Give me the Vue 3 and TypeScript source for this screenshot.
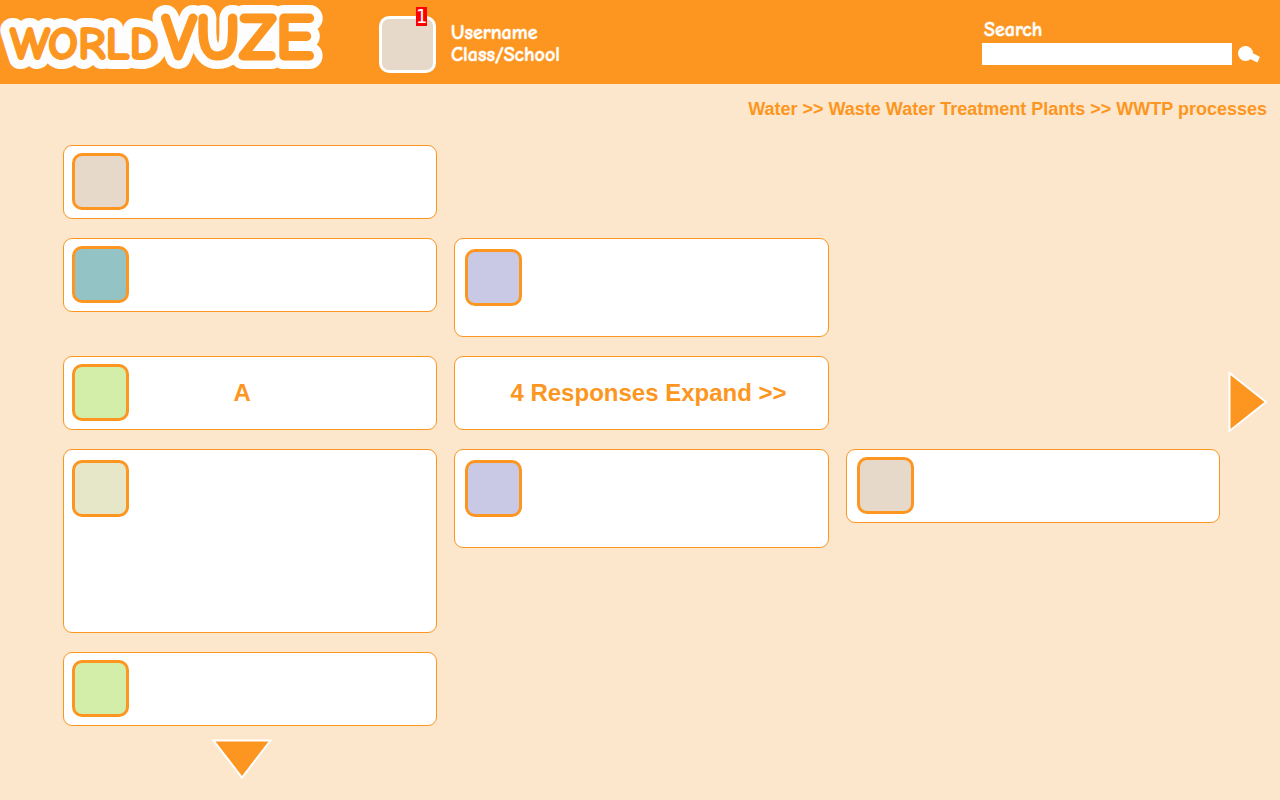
<script setup lang="ts">
import { ref } from 'vue'

type Tone = 'sand' | 'teal' | 'lilac' | 'lime' | 'cream'

interface Card {
  id: number
  row: number
  column: number
  size: 'short' | 'medium' | 'tall'
  tone?: Tone
  label?: string
  action?: boolean
}

const query = ref('')
const crumbs: string[] = ['Water', 'Waste Water Treatment Plants', 'WWTP processes']

const cards: Card[] = [
  { id: 1, row: 1, column: 1, size: 'short', tone: 'sand' },
  { id: 2, row: 2, column: 1, size: 'short', tone: 'teal' },
  { id: 3, row: 2, column: 2, size: 'medium', tone: 'lilac' },
  { id: 4, row: 3, column: 1, size: 'short', tone: 'lime', label: 'A' },
  { id: 5, row: 3, column: 2, size: 'short', label: '4 Responses Expand >>', action: true },
  { id: 6, row: 4, column: 1, size: 'tall', tone: 'cream' },
  { id: 7, row: 4, column: 2, size: 'medium', tone: 'lilac' },
  { id: 8, row: 4, column: 3, size: 'short', tone: 'sand' },
  { id: 9, row: 5, column: 1, size: 'short', tone: 'lime' },
]
</script>

<template>
  <div class="page">
    <header class="header">
      <a class="logo" href="#" aria-label="WorldVuze">
        <svg width="330" height="84" viewBox="0 0 330 84" aria-hidden="true">
          <g class="logo-halo">
            <text class="logo-world" x="10" y="59">WORLD</text>
            <text class="logo-vuze" x="162" y="59">VUZE</text>
          </g>
          <g class="logo-face">
            <text class="logo-world" x="10" y="59">WORLD</text>
            <text class="logo-vuze" x="162" y="59">VUZE</text>
          </g>
        </svg>
      </a>

      <div class="profile">
        <div class="avatar avatar-user sand">
          <span class="badge">1</span>
        </div>
        <div class="who">
          <div>Username</div>
          <div>Class/School</div>
        </div>
      </div>

      <form class="search" @submit.prevent>
        <label for="search">Search</label>
        <div class="search-row">
          <input id="search" v-model="query" type="text" />
          <button type="submit" aria-label="Search">
            <svg width="22" height="18" viewBox="0 0 22 18">
              <circle cx="7.5" cy="8.5" r="7.5" fill="#fff" />
              <path d="M13.5 7.5 22 12 19.3 17.5 10 13Z" fill="#fff" />
            </svg>
          </button>
        </div>
      </form>
    </header>

    <nav class="crumbs" aria-label="Breadcrumb">
      <template v-for="(crumb, i) in crumbs" :key="crumb">
        <span v-if="i > 0"> &gt;&gt; </span><a href="#">{{ crumb }}</a>
      </template>
    </nav>

    <main class="board">
      <component
        :is="card.action ? 'button' : 'article'"
        v-for="card in cards"
        :key="card.id"
        :class="['card', card.size, `row-${card.row}`, `col-${card.column}`]"
      >
        <div v-if="card.tone" :class="['avatar', card.tone]"></div>
        <span v-if="card.label" class="label">{{ card.label }}</span>
      </component>
    </main>

    <div class="more">
      <button type="button" aria-label="Scroll down">
        <svg width="62" height="41" viewBox="0 0 62 41">
          <path d="M2.5 1.5H59.5L31 38.5Z" fill="#fc9621" stroke="#fff" stroke-width="2" />
        </svg>
      </button>
    </div>

    <button class="next" type="button" aria-label="Next">
      <svg width="40" height="64" viewBox="0 0 40 64">
        <path d="M1.5 3V61L38 32Z" fill="#fc9621" stroke="#fff" stroke-width="2" />
      </svg>
    </button>
  </div>
</template>

<style>
body {
  margin: 0;
  background: #fce6cc;
}
</style>

<style scoped>
.page {
  position: relative;
  box-sizing: border-box;
  min-height: 100vh;
  background: #fce6cc;
  color: #fc9621;
  font-family: "Liberation Sans", Arial, sans-serif;
}

button {
  padding: 0;
  border: 0;
  background: none;
  color: inherit;
  font: inherit;
  cursor: pointer;
}

svg {
  display: block;
}

a {
  color: inherit;
  text-decoration: none;
}

.header {
  display: flex;
  min-height: 84px;
  background: #fc9621;
  color: #fff;
  font-family: Chalkboard, "Comic Neue", Lato, sans-serif;
  font-size: 20px;
  font-weight: 700;
  line-height: 22px;
}

.who,
.search label {
  -webkit-text-stroke: 1px rgba(255, 255, 255, 0.5);
}

.logo text {
  font-family: Chalkboard, "Comic Neue", "DejaVu Sans", sans-serif;
  font-weight: 700;
}

.logo .logo-world {
  font-size: 47px;
}

.logo .logo-vuze {
  font-size: 64px;
}

.logo-halo {
  fill: #fdfdfd;
  stroke: #fdfdfd;
  stroke-width: 20px;
  stroke-linejoin: round;
}

.logo-face {
  fill: #fc9621;
  stroke: #fc9621;
  stroke-width: 2px;
  stroke-linejoin: round;
}

.logo-face .logo-vuze {
  stroke-width: 3px;
}

.profile {
  display: flex;
  gap: 15px;
  padding: 16px 0 0 49px;
}

.who {
  padding-top: 6px;
}

.avatar {
  flex: none;
  box-sizing: border-box;
  width: 57px;
  height: 57px;
  border: 3px solid #fc9621;
  border-radius: 10px;
}

.avatar-user {
  position: relative;
  border-color: #fff;
}

.badge {
  position: absolute;
  top: -12px;
  right: 6px;
  width: 11px;
  height: 19px;
  background: #f00;
  font-family: "DejaVu Sans Condensed", "DejaVu Sans", sans-serif;
  font-size: 20px;
  font-weight: 400;
  line-height: 18px;
  text-align: center;
}

.sand { background: #e6d9c9; }
.teal { background: #94c3c5; }
.lilac { background: #c9c9e6; }
.lime { background: #d3eea8; }
.cream { background: #e6e6c9; }

.search {
  margin-left: auto;
  padding: 19px 20px 0 0;
}

.search label {
  display: block;
  padding: 0 0 2px 2px;
}

.search-row {
  display: flex;
  align-items: center;
  gap: 6px;
}

.search input {
  box-sizing: border-box;
  width: 250px;
  height: 22px;
  padding: 0 4px;
  border: 0;
  border-radius: 0;
  background: #fff;
  color: #333;
  font: 14px "Liberation Sans", Arial, sans-serif;
}

.crumbs {
  padding: 14px 13px 0;
  font-size: 18px;
  font-weight: 700;
  line-height: 22px;
  text-align: right;
}

.board {
  display: grid;
  grid-template-columns: repeat(3, minmax(0, 1fr));
  gap: 19px 17px;
  align-items: start;
  padding: 25px 60px 0 63px;
}

.card {
  display: flex;
  box-sizing: border-box;
  width: 100%;
  padding: 7px 8px;
  border: 1px solid #fc9621;
  border-radius: 9px;
  background: #fff;
}

.short { min-height: 74px; }
.medium { min-height: 99px; padding-top: 10px; }
.tall { min-height: 184px; padding-top: 10px; }

.row-1 { grid-row: 1; }
.row-2 { grid-row: 2; }
.row-3 { grid-row: 3; }
.row-4 { grid-row: 4; }
.row-5 { grid-row: 5; }
.col-1 { grid-column: 1; }
.col-2 { grid-column: 2; padding-left: 10px; }
.col-3 { grid-column: 3; padding-left: 10px; }

.label {
  flex: 1;
  align-self: center;
  font-size: 24px;
  font-weight: 700;
  line-height: 28px;
  text-align: center;
}

.avatar + .label {
  padding-right: 73px;
}

.label:only-child {
  padding-left: 12px;
}

.more {
  padding: 13px 0 20px 211px;
}

.next {
  position: absolute;
  top: calc(50% - 32px);
  right: 12px;
}
</style>
